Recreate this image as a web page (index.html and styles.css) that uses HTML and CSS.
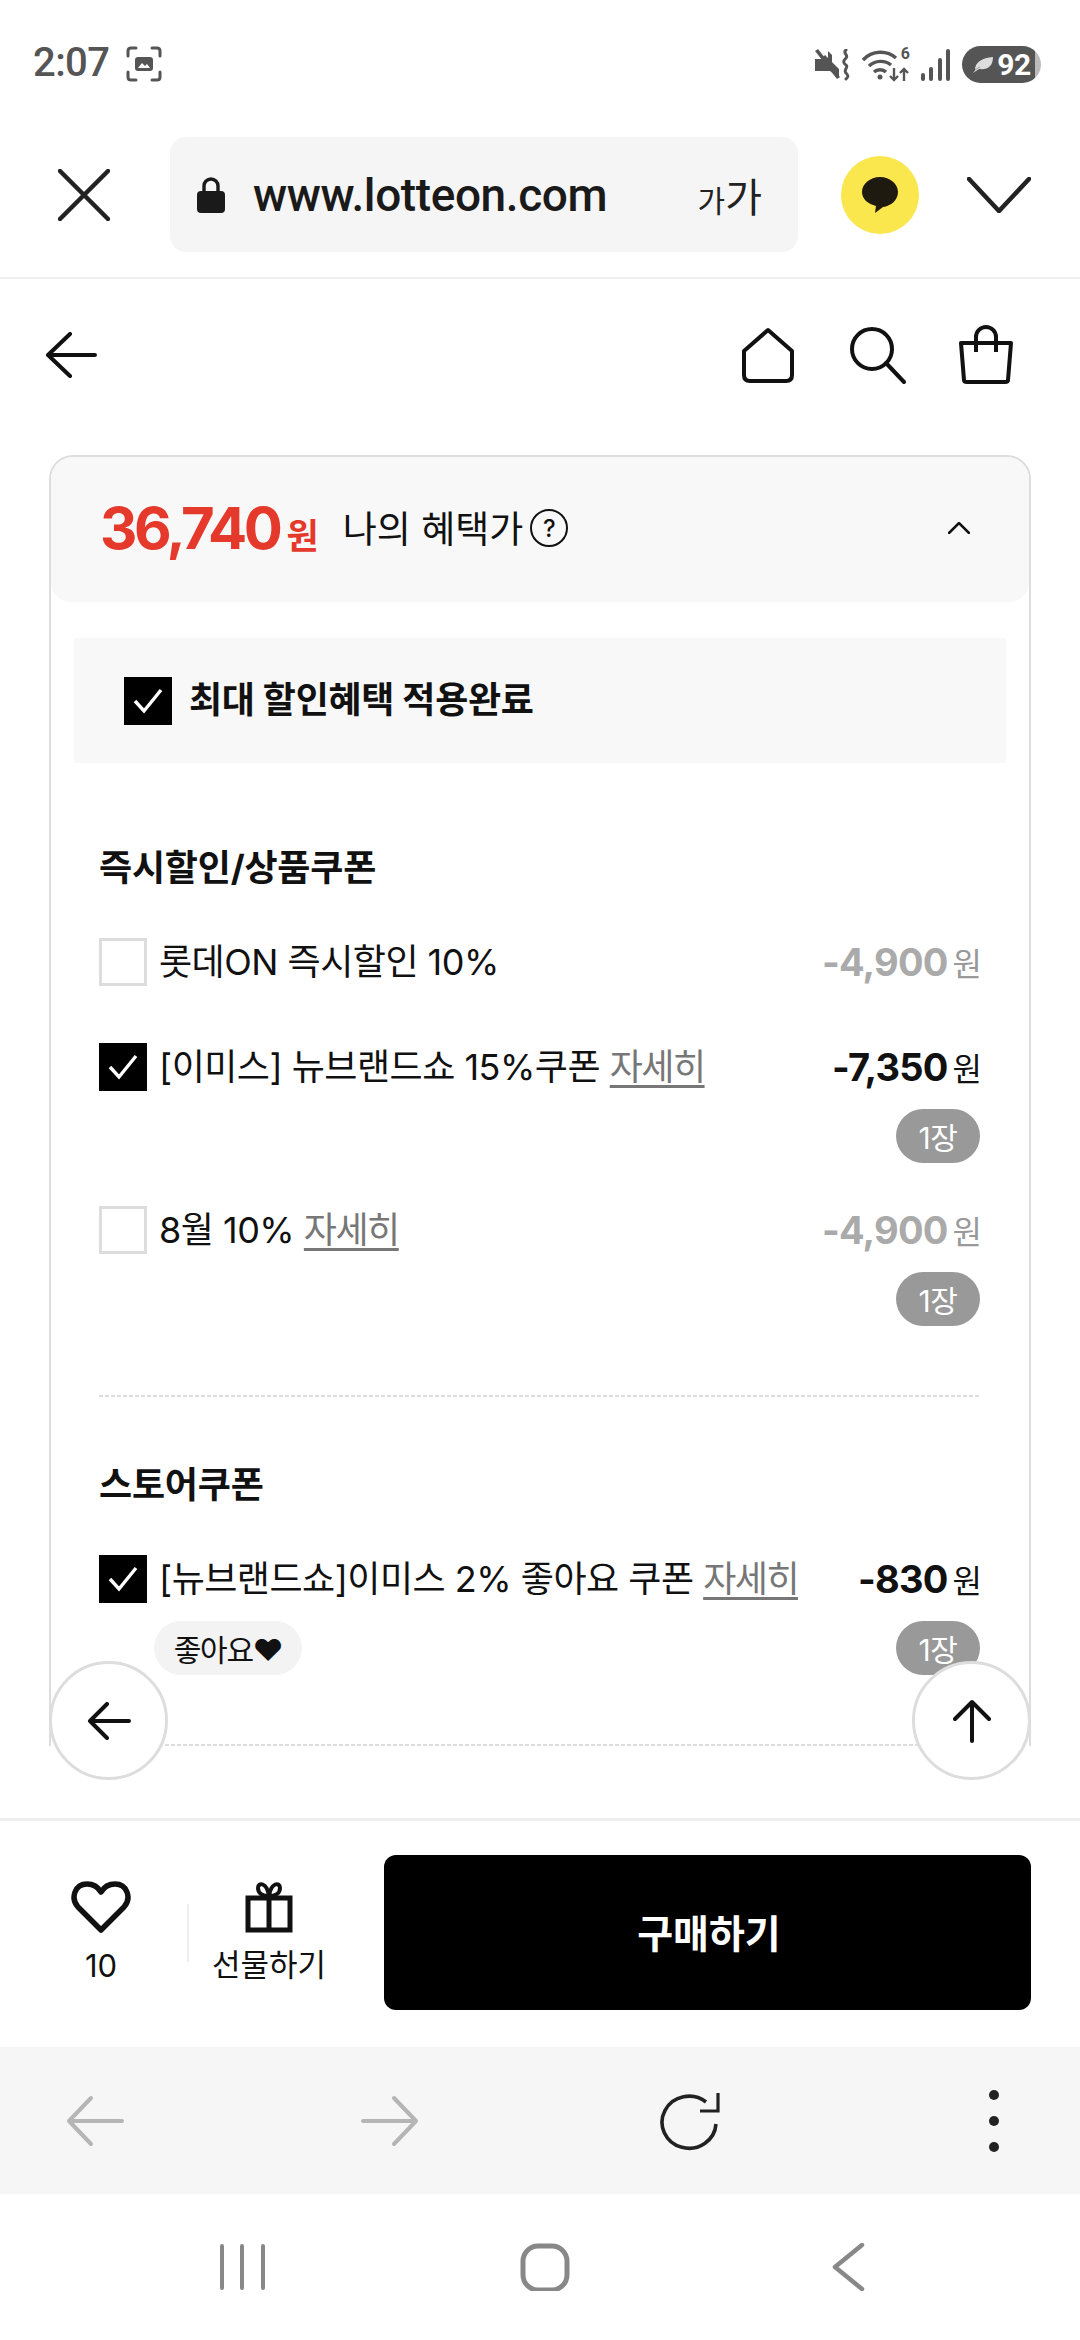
FILE: index.html
```html
<!DOCTYPE html>
<html lang="ko">
<head>
    <meta charset="UTF-8">
    <meta name="viewport" content="width=device-width, initial-scale=1.0">
    <title>lotteon</title>
    <link rel="stylesheet" href="styles.css">
</head>
<body>
    <div class="status-bar">
        <span class="status-time">2:07</span>
        <svg class="status-shot" width="36" height="36" viewBox="0 0 36 36" fill="none" stroke="#555" stroke-width="3" stroke-linecap="round">
            <path d="M2 10V5q0-3 3-3h5M26 2h5q3 0 3 3v5M34 26v5q0 3-3 3h-5M10 34H5q-3 0-3-3v-5"/>
            <rect x="9" y="11" width="18" height="14" rx="3" fill="#555" stroke="none"/>
            <path d="M12 22l4-5 3 3 2-2 3 4z" fill="#fff" stroke="none"/>
        </svg>
        <div class="status-right">
            <svg width="36" height="32" viewBox="0 0 36 32">
                <path d="M0 10h6l4-4 14 14v9l-9-7H0z" fill="#555"/>
                <path d="M2 1l20 27" stroke="#fff" stroke-width="2"/>
                <path d="M13 2l4 4v12l-4-4zM0 2l3-2 22 28-3 2z" fill="#555"/>
                <path d="M31 1c-4 3 3 5 0 8s-3 5 0 7-3 5 0 8 2 4 0 6" fill="none" stroke="#555" stroke-width="3" stroke-linecap="round"/>
            </svg>
            <div class="wifi">
                <svg width="48" height="34" viewBox="0 0 48 34" fill="none" stroke="#555" stroke-width="3.4">
                    <path d="M1 12c9-10 24-10 33-2"/>
                    <path d="M7 18c6-6 16-6 22-1"/>
                    <path d="M12 24c3-3 9-3 12 0"/>
                    <circle cx="18" cy="29" r="2.5" fill="#555" stroke="none"/>
                    <path d="M32 20v12M28 28l4 4 4-4M42 33V21M38 25l4-4 4 4" stroke-width="2.4"/>
                </svg>
                <span class="wifi-num">6</span>
            </div>
            <svg width="30" height="32" viewBox="0 0 30 32" fill="#555">
                <rect x="0" y="24" width="4" height="8" rx="2"/>
                <rect x="8" y="18" width="4" height="14" rx="2"/>
                <rect x="17" y="9" width="4" height="23" rx="2"/>
                <rect x="25" y="0" width="4" height="32" rx="2"/>
            </svg>
            <div class="battery">
                <svg width="22" height="18" viewBox="0 0 22 18"><path d="M1 17c2-3 4-5 8-6-3 0-5 2-6 3C3 6 10 2 21 1c0 9-5 13-14 12z" fill="#ddd"/></svg>
                <span>92</span>
            </div>
        </div>
    </div>

    <div class="browser-bar">
        <svg class="browser-close" width="52" height="52" viewBox="0 0 52 52" stroke="#222" stroke-width="4.5" stroke-linecap="round">
            <path d="M2 2l48 48M50 2L2 50"/>
        </svg>
        <div class="url-box">
            <svg width="30" height="36" viewBox="0 0 30 36">
                <path d="M8 16V9a7 7 0 0 1 14 0v7" fill="none" stroke="#1a1a1a" stroke-width="3.4"/>
                <rect x="1" y="14" width="28" height="22" rx="4" fill="#1a1a1a"/>
            </svg>
            <span class="url-text">www.lotteon.com</span>
            <span class="url-size"><small>가</small>가</span>
        </div>
        <div class="kakao">
            <svg width="38" height="38" viewBox="0 0 38 38"><path d="M19 1c10 0 18 7 18 15s-7 14-15 15l-8 6 1-7C7 28 1 23 1 16 1 8 9 1 19 1z" fill="#1f1a10"/></svg>
        </div>
        <svg class="browser-more" width="64" height="36" viewBox="0 0 64 36" fill="none" stroke="#222" stroke-width="4.5" stroke-linecap="round">
            <path d="M2 2l30 32L62 2"/>
        </svg>
    </div>

    <main class="page">
        <nav class="page-nav">
            <svg class="nav-back" width="52" height="46" viewBox="0 0 52 46" fill="none" stroke="#111" stroke-width="4" stroke-linecap="round" stroke-linejoin="round">
                <path d="M25 2L3 23l22 21M3 23h47"/>
            </svg>
            <div class="nav-icons">
                <svg width="60" height="60" viewBox="0 0 60 60" fill="none" stroke="#111" stroke-width="4" stroke-linejoin="round">
                    <path d="M30 5L6 26v24q0 6 6 6h36q6 0 6-6V26z"/>
                </svg>
                <svg width="60" height="60" viewBox="0 0 60 60" fill="none" stroke="#111" stroke-width="4" stroke-linecap="round">
                    <circle cx="25" cy="24" r="20"/>
                    <path d="M39 38l18 19"/>
                </svg>
                <svg width="60" height="60" viewBox="0 0 60 60" fill="none" stroke="#111" stroke-width="4" stroke-linejoin="round">
                    <path d="M5 18h50l-3 37q0 2-3 2H11q-3 0-3-2z"/>
                    <path d="M20 27V12a10 10 0 0 1 20 0v15"/>
                </svg>
            </div>
        </nav>

        <section class="card">
            <div class="card-head">
                <span class="my-price">36,740<em>원</em></span>
                <span class="my-label">나의 혜택가</span>
                <span class="help">?</span>
                <svg class="fold" width="22" height="12" viewBox="0 0 22 12" fill="none" stroke="#111" stroke-width="2.5" stroke-linecap="round">
                    <path d="M1 11L11 1l10 10"/>
                </svg>
            </div>

            <div class="notice">
                <span class="check on">
                    <svg width="32" height="28" viewBox="0 0 32 28" fill="none" stroke="#fff" stroke-width="3.4"><path d="M3 14l9 10L29 3"/></svg>
                </span>
                <strong>최대 할인혜택 적용완료</strong>
            </div>

            <div class="coupons">
                <h3>즉시할인/상품쿠폰</h3>

                <div class="coupon coupon-plain off">
                    <div class="coupon-main">
                        <span class="check"></span>
                        <p class="coupon-name">롯데ON 즉시할인 10%</p>
                        <p class="coupon-price">-4,900<em>원</em></p>
                    </div>
                </div>

                <div class="coupon">
                    <div class="coupon-main">
                        <span class="check on">
                            <svg width="32" height="28" viewBox="0 0 32 28" fill="none" stroke="#fff" stroke-width="3.4"><path d="M3 14l9 10L29 3"/></svg>
                        </span>
                        <p class="coupon-name">[이미스] 뉴브랜드쇼 15%쿠폰 <a>자세히</a></p>
                        <p class="coupon-price">-7,350<em>원</em></p>
                    </div>
                    <div class="coupon-sub"><span class="qty">1장</span></div>
                </div>

                <div class="coupon off">
                    <div class="coupon-main">
                        <span class="check"></span>
                        <p class="coupon-name">8월 10% <a>자세히</a></p>
                        <p class="coupon-price">-4,900<em>원</em></p>
                    </div>
                    <div class="coupon-sub"><span class="qty">1장</span></div>
                </div>
            </div>

            <div class="coupons coupons-store">
                <h3>스토어쿠폰</h3>

                <div class="coupon">
                    <div class="coupon-main">
                        <span class="check on">
                            <svg width="32" height="28" viewBox="0 0 32 28" fill="none" stroke="#fff" stroke-width="3.4"><path d="M3 14l9 10L29 3"/></svg>
                        </span>
                        <p class="coupon-name">[뉴브랜드쇼]이미스 2% 좋아요 쿠폰 <a>자세히</a></p>
                        <p class="coupon-price">-830<em>원</em></p>
                    </div>
                    <div class="coupon-sub coupon-sub-like">
                        <span class="like-tag">좋아요♥</span>
                        <span class="qty">1장</span>
                    </div>
                </div>
            </div>
        </section>

        <button class="float-btn float-left">
            <svg width="44" height="38" viewBox="0 0 44 38" fill="none" stroke="#111" stroke-width="4" stroke-linecap="round" stroke-linejoin="round">
                <path d="M20 2L3 19l17 17M3 19h39"/>
            </svg>
        </button>
        <button class="float-btn float-right">
            <svg width="38" height="44" viewBox="0 0 38 44" fill="none" stroke="#111" stroke-width="4" stroke-linecap="round" stroke-linejoin="round">
                <path d="M2 20L19 3l17 17M19 3v39"/>
            </svg>
        </button>
    </main>

    <div class="buy-bar">
        <div class="like">
            <svg width="60" height="54" viewBox="0 0 60 54" fill="none" stroke="#111" stroke-width="5.5" stroke-linejoin="round">
                <path d="M30 50L7 27C-1 18 4 4 16 4c6 0 11 3 14 8 3-5 8-8 14-8 12 0 17 14 9 23z"/>
            </svg>
            <span>10</span>
        </div>
        <span class="buy-sep"></span>
        <div class="gift">
            <svg width="48" height="52" viewBox="0 0 48 52" fill="none" stroke="#111" stroke-width="5">
                <path d="M3 17h42v32H3zM24 17v32"/>
                <path d="M24 15c-7 0-11-3-11-8 0-6 9-6 11 8zM24 15c7 0 11-3 11-8 0-6-9-6-11 8z" stroke-width="4"/>
            </svg>
            <span>선물하기</span>
        </div>
        <button class="buy-btn">구매하기</button>
    </div>

    <div class="toolbar">
        <svg width="64" height="52" viewBox="0 0 64 52" fill="none" stroke="#b5b5b5" stroke-width="4" stroke-linecap="round" stroke-linejoin="round">
            <path d="M28 3L6 26l22 23M6 26h53"/>
        </svg>
        <svg width="64" height="52" viewBox="0 0 64 52" fill="none" stroke="#b5b5b5" stroke-width="4" stroke-linecap="round" stroke-linejoin="round">
            <path d="M36 3l22 23-22 23M58 26H5"/>
        </svg>
        <svg width="64" height="62" viewBox="0 0 64 62" fill="none" stroke="#222" stroke-width="3.6">
            <path d="M58 34a27 26 0 1 1-10-22"/>
            <path d="M60 3v18H42" stroke-width="3.2"/>
        </svg>
        <svg width="64" height="62" viewBox="0 0 64 62" fill="#222">
            <circle cx="32" cy="5" r="5"/>
            <circle cx="32" cy="31" r="5"/>
            <circle cx="32" cy="57" r="5"/>
        </svg>
    </div>

    <div class="system-nav">
        <svg width="60" height="48" viewBox="0 0 60 48" stroke="#888" stroke-width="4" stroke-linecap="round">
            <path d="M10 3v42M30 3v42M51 3v42"/>
        </svg>
        <svg width="60" height="48" viewBox="0 0 60 48" fill="none" stroke="#888" stroke-width="5">
            <rect x="8" y="3" width="44" height="44" rx="15"/>
        </svg>
        <svg width="60" height="48" viewBox="0 0 60 48" fill="none" stroke="#888" stroke-width="4.5" stroke-linecap="round" stroke-linejoin="round">
            <path d="M44 2L17 24l27 22"/>
        </svg>
    </div>
</body>
</html>
```

FILE: styles.css
```css
* {
    box-sizing: border-box;
}

body {
    margin: 0;
    width: 1080px;
    height: 2340px;
    overflow: hidden;
    background-color: #fff;
    color: #111;
    font-family: Inter, "Noto Sans CJK KR", sans-serif;
}

p, h3 {
    margin: 0;
}

em {
    font-style: normal;
}

svg {
    display: block;
    flex: none;
}

/* status bar */
.status-bar {
    display: flex;
    align-items: flex-start;
    height: 112px;
    padding: 40px 39px 0 33px;
    font-family: Roboto, sans-serif;
}

.status-time {
    font-size: 40px;
    line-height: 46px;
    font-weight: 500;
    letter-spacing: -0.6px;
    color: #555;
}

.status-shot {
    margin: 6px 0 0 17px;
}

.status-right {
    display: flex;
    align-items: center;
    gap: 11px;
    margin-left: auto;
    margin-top: 6px;
}

.wifi {
    position: relative;
}

.wifi-num {
    position: absolute;
    top: -3px;
    right: 0;
    font-size: 16px;
    line-height: 18px;
    font-weight: 700;
    color: #555;
}

.battery {
    display: flex;
    align-items: center;
    justify-content: center;
    gap: 3px;
    width: 79px;
    height: 37px;
    border-radius: 19px;
    background: linear-gradient(90deg, #555 93%, #bbb 93%);
    color: #fff;
    font-size: 30px;
    font-weight: 700;
    letter-spacing: -0.5px;
}

/* browser address bar */
.browser-bar {
    display: flex;
    align-items: center;
    height: 167px;
    padding-left: 58px;
    border-bottom: 2px solid #eee;
}

.browser-close {
    margin-right: 60px;
}

.url-box {
    display: flex;
    align-items: center;
    width: 628px;
    height: 115px;
    padding: 0 36px 0 26px;
    border-radius: 16px;
    background-color: #f5f5f5;
}

.url-text {
    margin-left: 27px;
    font-family: Roboto, sans-serif;
    font-size: 46px;
    font-weight: 500;
    letter-spacing: -0.4px;
    color: #1a1a1a;
}

.url-size {
    margin-left: auto;
    font-size: 40px;
    color: #222;
}

.url-size small {
    font-size: 30px;
}

.kakao {
    display: flex;
    align-items: center;
    justify-content: center;
    width: 78px;
    height: 78px;
    margin-left: 43px;
    border-radius: 50%;
    background-color: #fae64d;
}

.browser-more {
    margin-left: 48px;
}

/* page */
.page {
    position: relative;
    height: 1539px;
    overflow: hidden;
}

.page-nav {
    display: flex;
    align-items: center;
    height: 152px;
    padding: 0 64px 0 45px;
    margin-bottom: 24px;
}

.nav-icons {
    display: flex;
    gap: 49px;
    margin-left: auto;
}

.card {
    margin: 0 49px;
    border: 2px solid #ddd;
    border-bottom: 0;
    border-radius: 24px 24px 0 0;
}

.card-head {
    display: flex;
    align-items: center;
    height: 145px;
    padding: 0 59px 3px 49px;
    border-radius: 22px 22px 20px 20px;
    background-color: #f8f8f8;
}

.my-price {
    font-size: 58px;
    font-weight: 700;
    letter-spacing: -3.4px;
    color: #e5392c;
}

.my-price em {
    margin-left: 7px;
    font-size: 35px;
    letter-spacing: 0;
}

.my-label {
    margin-left: 24px;
    padding-bottom: 3px;
    font-size: 37px;
}

.help {
    display: flex;
    align-items: center;
    justify-content: center;
    width: 38px;
    height: 38px;
    margin-left: 7px;
    border: 2.5px solid #111;
    border-radius: 50%;
    font-size: 24px;
    font-weight: 500;
}

.fold {
    margin-left: auto;
}

.notice {
    display: flex;
    align-items: center;
    gap: 17px;
    height: 125px;
    margin: 36px 23px 0 23px;
    padding-left: 50px;
    background-color: #f8f8f8;
}

.notice strong {
    padding-bottom: 8px;
    font-size: 36px;
    font-weight: 700;
    letter-spacing: -0.3px;
}

.check {
    display: flex;
    align-items: center;
    justify-content: center;
    flex: none;
    width: 48px;
    height: 48px;
    border: 3px solid #ddd;
    background-color: #fff;
}

.check.on {
    border: 0;
    background-color: #000;
}

.coupons {
    margin: 81px 49px 0 48px;
    padding-bottom: 28px;
    background: linear-gradient(90deg, #ddd 4px, transparent 4px) left bottom / 6px 2px repeat-x;
}

.coupons-store {
    margin-top: 64px;
}

.coupons h3 {
    margin-bottom: 46px;
    font-size: 36px;
    line-height: 48px;
    font-weight: 700;
    letter-spacing: -0.2px;
}

.coupon {
    margin-bottom: 43px;
}

.coupon-plain {
    margin-bottom: 57px;
}

.coupon-main {
    display: flex;
    align-items: center;
    height: 48px;
}

.coupon-name {
    margin-left: 12px;
    font-size: 36px;
    line-height: 48px;
    letter-spacing: -0.5px;
    white-space: nowrap;
}

.coupon-name a {
    color: #777;
    letter-spacing: -1.5px;
    text-decoration: underline;
    text-underline-offset: 5px;
}

.coupon-price {
    margin-left: auto;
    margin-right: -2px;
    font-size: 38px;
    font-weight: 700;
    letter-spacing: -0.8px;
    white-space: nowrap;
}

.coupon-price em {
    margin-left: 5px;
    font-size: 32px;
    font-weight: 400;
    letter-spacing: 0;
}

.off .coupon-price {
    color: #aaa;
}

.off .coupon-price em {
    color: #999;
}

.coupon-sub {
    display: flex;
    justify-content: flex-end;
    margin-top: 18px;
}

.coupon-sub-like {
    justify-content: space-between;
    padding-left: 55px;
}

.qty, .like-tag {
    display: flex;
    align-items: center;
    justify-content: center;
    height: 54px;
    border-radius: 27px;
    font-size: 30px;
    letter-spacing: -0.5px;
}

.qty {
    width: 84px;
    background-color: #999;
    color: #fff;
}

.like-tag {
    width: 148px;
    background-color: #f3f3f3;
    color: #111;
    letter-spacing: -1.2px;
}

.float-btn {
    position: absolute;
    top: 1382px;
    display: flex;
    align-items: center;
    justify-content: center;
    width: 119px;
    height: 119px;
    padding: 0;
    border: 3px solid #ddd;
    border-radius: 50%;
    background-color: #fff;
}

.float-left {
    left: 49px;
}

.float-right {
    left: 912px;
}

/* buy bar */
.buy-bar {
    display: flex;
    align-items: center;
    height: 229px;
    padding: 0 49px 3px 46px;
    border-top: 3px solid #eee;
}

.like, .gift {
    display: flex;
    flex-direction: column;
    align-items: center;
    gap: 12px;
    font-size: 31px;
    line-height: 40px;
}

.like {
    width: 110px;
}

.buy-sep {
    width: 2px;
    height: 58px;
    margin-left: 31px;
    background-color: #eee;
}

.gift {
    width: 160px;
}

.buy-btn {
    flex: 1;
    height: 155px;
    margin-left: 35px;
    padding: 0 0 3px 3px;
    border: 0;
    border-radius: 12px;
    background-color: #000;
    color: #fff;
    font-family: inherit;
    font-size: 39px;
    font-weight: 700;
}

/* browser toolbar */
.toolbar {
    display: grid;
    grid-template-columns: 295px 300px 304px 64px;
    align-items: center;
    height: 147px;
    padding-left: 63px;
    background-color: #f6f6f6;
}

/* system navigation */
.system-nav {
    display: flex;
    gap: 243px;
    height: 146px;
    padding: 49px 0 0 212px;
}
```
